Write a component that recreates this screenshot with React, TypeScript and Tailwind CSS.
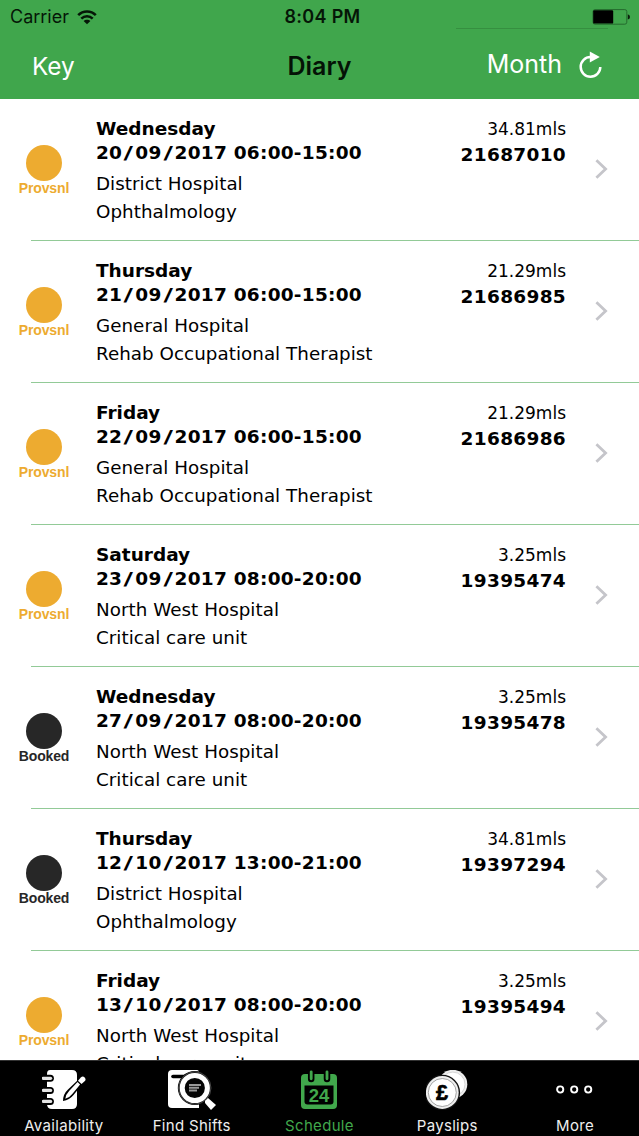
import React from 'react';

interface Shift {
  day: string;
  date: string;
  time: string;
  hospital: string;
  ward: string;
  distance: string;
  reference: string;
  status: 'Provsnl' | 'Booked';
}

const shifts: Shift[] = [
  { day: 'Wednesday', date: '20/09/2017', time: '06:00-15:00', hospital: 'District Hospital', ward: 'Ophthalmology', distance: '34.81mls', reference: '21687010', status: 'Provsnl' },
  { day: 'Thursday', date: '21/09/2017', time: '06:00-15:00', hospital: 'General Hospital', ward: 'Rehab Occupational Therapist', distance: '21.29mls', reference: '21686985', status: 'Provsnl' },
  { day: 'Friday', date: '22/09/2017', time: '06:00-15:00', hospital: 'General Hospital', ward: 'Rehab Occupational Therapist', distance: '21.29mls', reference: '21686986', status: 'Provsnl' },
  { day: 'Saturday', date: '23/09/2017', time: '08:00-20:00', hospital: 'North West Hospital', ward: 'Critical care unit', distance: '3.25mls', reference: '19395474', status: 'Provsnl' },
  { day: 'Wednesday', date: '27/09/2017', time: '08:00-20:00', hospital: 'North West Hospital', ward: 'Critical care unit', distance: '3.25mls', reference: '19395478', status: 'Booked' },
  { day: 'Thursday', date: '12/10/2017', time: '13:00-21:00', hospital: 'District Hospital', ward: 'Ophthalmology', distance: '34.81mls', reference: '19397294', status: 'Booked' },
  { day: 'Friday', date: '13/10/2017', time: '08:00-20:00', hospital: 'North West Hospital', ward: 'Critical care unit', distance: '3.25mls', reference: '19395494', status: 'Provsnl' },
];

const WifiIcon = () => (
  <svg width="20" height="15" viewBox="0 0 20 15" fill="none" stroke="#051607" strokeWidth="2.5">
    <path d="M1.2 5.2C6 .2 14 .2 18.8 5.2" />
    <path d="M4.3 8.6c3.2-3.2 8.2-3.2 11.4 0" />
    <path d="M6.6 10.9c1.8-1.7 5-1.7 6.8 0L10 14.2z" fill="#051607" stroke="none" />
  </svg>
);

const BatteryIcon = () => (
  <svg width="38" height="16" viewBox="0 0 38 16">
    <rect x="1" y=".6" width="33.8" height="14.6" rx="2" fill="none" stroke="#256b2e" />
    <rect x="1.2" y="1.2" width="20" height="13.4" rx="1.2" fill="#000" />
    <path d="M35.8 5.2q2.2.6 2.2 2.7t-2.2 2.7z" fill="#0a1f0c" />
  </svg>
);

const ReloadIcon = () => (
  <svg width="24" height="28" viewBox="0 0 24 28">
    <path d="M11.6 6.1A9.8 9.8 0 1 0 21.3 15.9" fill="none" stroke="#fff" strokeWidth="2.5" />
    <path d="M10.8.6 20.8 5.9 10.8 11.4z" fill="#fff" />
  </svg>
);

const ChevronIcon = () => (
  <svg width="13" height="20" viewBox="0 0 13 20" fill="none" stroke="#c5c5ca" strokeWidth="2.8">
    <path d="m1.4 1.2 9.2 8.8-9.2 8.8" />
  </svg>
);

const NotebookIcon = () => (
  <svg width="44" height="40" viewBox="0 0 44 40">
    <path d="M8 0h22q5 0 5 5v29q0 5-5 5H10q-5 0-5-5V4q0-4 3-4z" fill="#fff" />
    {[8.3, 20.4, 31.4].map((y) => (
      <g key={y} fill="none" strokeLinecap="round">
        <path d={`M0 ${y}h8.4`} stroke="#000" strokeWidth="7" />
        <path d={`M1.2 ${y}h7.4`} stroke="#e4e4e4" strokeWidth="3.2" />
      </g>
    ))}
    <path d="M21 31q0-7 5-11.5L36 10l4.5 4-9 11q-4 5-10.5 6z" fill="#000" />
    <path d="M23.3 28.8q.6-4.5 4-8L35.5 12l2.6 2.4-7.6 9.4q-3 4-7.2 5z" fill="#fff" />
    <path d="m36 10.7 2.8-3.2q2-1.8 3.8 0t.3 3.5L39.5 14z" fill="#fff" />
  </svg>
);

const SearchShiftsIcon = () => (
  <svg width="49" height="40" viewBox="0 0 49 40">
    <path d="M5 0h25q2 0 2 3v35H5q-4 0-4-4V4q0-4 4-4z" fill="#fff" />
    <path d="M6 6.5h11" stroke="#000" strokeWidth="3.6" strokeLinecap="round" />
    <path d="M17 5.5h10" stroke="#000" strokeWidth="2" />
    <circle cx="27.8" cy="18" r="17" fill="#000" />
    <path d="m38 29 3-1 8 7-5 5-6-7z" fill="#fff" />
    <circle cx="27.8" cy="18" r="16.2" fill="#111" stroke="#555" strokeWidth=".8" />
    <circle cx="27.8" cy="18" r="12.6" fill="#050505" stroke="#fff" strokeWidth="5" />
    <path d="M22 15h12M22 17.8h10M22 20.5h8" stroke="#999" strokeWidth="2" />
  </svg>
);

const CalendarIcon = () => (
  <svg width="38" height="40" viewBox="0 0 38 40">
    <path d="M5 4h28q4 0 4 4v27q0 4-4 4H5q-4 0-4-4V8q0-4 4-4z" fill="#41a84c" />
    <path d="M4.5 15.5h29v16q0 3-3 3h-23q-3 0-3-3z" fill="#000" />
    <g strokeLinecap="round">
      <path d="M11.2 3v6M27 3v6" stroke="#000" strokeWidth="6.5" />
      <path d="M11.2 1.8v7M27 1.8v7" stroke="#41a84c" strokeWidth="2.8" />
    </g>
    <text x="19" y="31.6" textAnchor="middle" fill="#41a84c" fontFamily="Liberation Sans" fontWeight="700" fontSize="18.5">24</text>
  </svg>
);

const CoinsIcon = () => (
  <svg width="43" height="40" viewBox="0 0 43 40">
    <circle cx="26.8" cy="14.3" r="14.5" fill="#eee" />
    <circle cx="26.8" cy="14.3" r="12.2" fill="#fff" stroke="#ccc" strokeWidth=".8" />
    <circle cx="16.3" cy="22.5" r="17.8" fill="#111" />
    <circle cx="16.3" cy="22.5" r="16.4" fill="#eee" />
    <circle cx="16.3" cy="22.5" r="14" fill="#fff" stroke="#999" strokeWidth=".9" />
    <text x="16" y="30" textAnchor="middle" fill="#000" stroke="#000" strokeWidth=".7" fontFamily="Liberation Sans" fontWeight="700" fontSize="21.5">£</text>
  </svg>
);

const MoreIcon = () => (
  <svg width="38" height="40" viewBox="0 0 38 40" fill="none" stroke="#fff" strokeWidth="1.9">
    <circle cx="4.2" cy="19.5" r="3.1" />
    <circle cx="18.2" cy="19.5" r="3.1" />
    <circle cx="32.2" cy="19.5" r="3.1" />
  </svg>
);

const tabs = [
  { label: 'Availability', icon: <NotebookIcon />, active: false },
  { label: 'Find Shifts', icon: <SearchShiftsIcon />, active: false },
  { label: 'Schedule', icon: <CalendarIcon />, active: true },
  { label: 'Payslips', icon: <CoinsIcon />, active: false },
  { label: 'More', icon: <MoreIcon />, active: false },
];

const ShiftDate: React.FC<{ date: string; time: string }> = ({ date, time }) => {
  const [day, month, year] = date.split('/');
  return (
    <p className="text-[18.5px] leading-6 font-bold tracking-[0.25px]">
      {day}
      <span className="inline-block scale-x-140 px-[3px]">/</span>
      {month}
      <span className="inline-block scale-x-140 px-[3px]">/</span>
      {year} {time}
    </p>
  );
};

const ShiftRow: React.FC<{ shift: Shift }> = ({ shift }) => (
  <div className="flex h-[142px] shrink-0 whitespace-nowrap text-black">
    <div className={`flex w-[88px] shrink-0 flex-col items-center pt-[46px] ${shift.status === 'Booked' ? 'text-[#272727]' : 'text-[#edab30]'}`}>
      <div className="h-9 w-9 rounded-full bg-current" />
      <span className="font-['Liberation_Sans',sans-serif] text-[14px] leading-[14px] font-bold tracking-[-0.15px]">{shift.status}</span>
    </div>
    <div className="flex-1 pt-[18px] pl-2">
      <p className="text-[18.5px] leading-6 font-bold">{shift.day}</p>
      <ShiftDate date={shift.date} time={shift.time} />
      <p className="mt-[5px] text-[18.3px] leading-7 tracking-[0.04px]">{shift.hospital}</p>
      <p className="text-[18.3px] leading-7 tracking-[0.04px]">{shift.ward}</p>
    </div>
    <div className="pt-[17px] text-right">
      <p className="text-[17px] leading-[26px]">{shift.distance}</p>
      <p className="text-[18.5px] leading-[26px] font-bold tracking-[0.3px]">{shift.reference}</p>
    </div>
    <div className="w-[73px] pt-[60px] pl-[29px]">
      <ChevronIcon />
    </div>
  </div>
);

const App: React.FC = () => (
  <div className="flex h-[1136px] w-[639px] flex-col overflow-hidden bg-white font-['DejaVu_Sans',sans-serif]">
    <header className="h-[99px] shrink-0 bg-[#40a64c] font-['Inter',sans-serif]">
      <div className="grid h-[28px] grid-cols-3 items-center pt-[5px] pr-[9px] pl-[10px] text-[#051607]">
        <div className="flex items-center gap-2">
          <span className="text-[18px] leading-6">Carrier</span>
          <WifiIcon />
        </div>
        <span className="pl-[5px] text-center text-[18px] leading-6 font-semibold tracking-[0.3px]">8:04 PM</span>
        <div className="flex justify-end">
          <BatteryIcon />
        </div>
      </div>
      <div className="mr-[31px] ml-auto h-px w-[152px] bg-[#368f40]" />
      <div className="grid grid-cols-3 items-center pt-[17px] text-[25px] leading-9">
        <span className="pl-8 text-[24.3px] text-white">Key</span>
        <span className="text-center font-semibold text-[#041206]">Diary</span>
        <div className="flex items-center justify-end gap-[17px] pr-[36px] pb-px text-white">
          <span className="pb-[2px]">Month</span>
          <ReloadIcon />
        </div>
      </div>
    </header>
    <main className="flex min-h-0 flex-1 flex-col overflow-hidden">
      {shifts.map((shift, index) => (
        <div key={shift.reference} className="h-[142px] shrink-0">
          {index > 0 && <div className="-mt-px ml-[31px] h-px bg-[#92ca97]" />}
          <ShiftRow shift={shift} />
        </div>
      ))}
    </main>
    <nav className="grid h-[76px] shrink-0 grid-cols-5 border-t border-[#333] bg-black font-['Inter',sans-serif]">
      {tabs.map((tab) => (
        <div key={tab.label} className={`flex flex-col items-center pt-[9px] ${tab.active ? 'text-[#41a84c]' : 'text-[#eee]'}`}>
          {tab.icon}
          <span className="mt-[6px] text-[15px] leading-5 tracking-[0.32px]">{tab.label}</span>
        </div>
      ))}
    </nav>
  </div>
);

export default App;
